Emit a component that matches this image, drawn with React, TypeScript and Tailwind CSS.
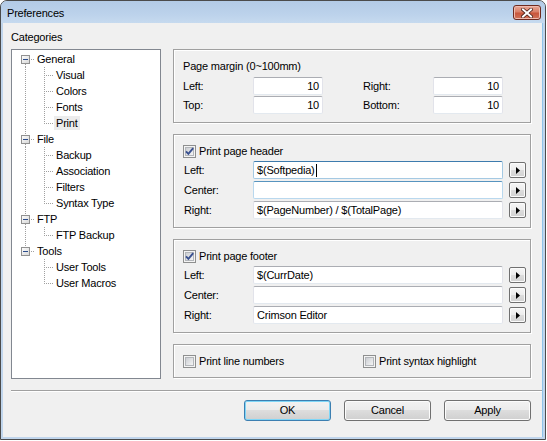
import React from "react";

type Node = { label: string; children: string[] };

const tree: Node[] = [
  { label: "General", children: ["Visual", "Colors", "Fonts", "Print"] },
  { label: "File", children: ["Backup", "Association", "Filters", "Syntax Type"] },
  { label: "FTP", children: ["FTP Backup"] },
  { label: "Tools", children: ["User Tools", "User Macros"] },
];

const DOT = "#a0a0a0";

function TopRow({ label, first, last }: { label: string; first: boolean; last: boolean }) {
  return (
    <div className="flex h-[16px] items-center">
      <svg width="23" height="16" className="shrink-0">
        <defs>
          <linearGradient id="bx" x1="0" y1="0" x2="1" y2="1">
            <stop offset="0" stopColor="#ffffff" />
            <stop offset="1" stopColor="#d6d6d6" />
          </linearGradient>
        </defs>
        {!first && <line x1="13.5" y1="0" x2="13.5" y2="4" stroke={DOT} strokeDasharray="1 1" />}
        {!last && <line x1="13.5" y1="13" x2="13.5" y2="16" stroke={DOT} strokeDasharray="1 1" />}
        <rect x="9.5" y="4.5" width="8" height="8" fill="url(#bx)" stroke="#919191" />
        <line x1="11" y1="8.5" x2="16" y2="8.5" stroke="#2b4c8c" />
        <line x1="19" y1="8.5" x2="23" y2="8.5" stroke={DOT} strokeDasharray="1 1" />
      </svg>
      <span className="px-[2px] h-[14px] leading-[14px]">{label}</span>
    </div>
  );
}

function ChildRow({
  label,
  parentLast,
  last,
  selected,
}: {
  label: string;
  parentLast: boolean;
  last: boolean;
  selected?: boolean;
}) {
  return (
    <div className="flex h-[16px] items-center">
      <svg width="42" height="16" className="shrink-0">
        {!parentLast && <line x1="13.5" y1="0" x2="13.5" y2="16" stroke={DOT} strokeDasharray="1 1" />}
        <line x1="32.5" y1="0" x2="32.5" y2={last ? 9 : 16} stroke={DOT} strokeDasharray="1 1" />
        <line x1="34" y1="8.5" x2="42" y2="8.5" stroke={DOT} strokeDasharray="1 1" />
      </svg>
      <span className={"px-[2px] h-[14px] leading-[14px] " + (selected ? "bg-[#ececec]" : "")}>{label}</span>
    </div>
  );
}

function Tree() {
  return (
    <div className="w-[150px] h-[330px] border border-[#828790] bg-white pt-[1px]">
      {tree.map((n, i) => {
        const last = i === tree.length - 1;
        return (
          <div key={n.label}>
            <TopRow label={n.label} first={i === 0} last={last} />
            {n.children.map((c, j) => (
              <ChildRow
                key={c}
                label={c}
                parentLast={last}
                last={j === n.children.length - 1}
                selected={c === "Print"}
              />
            ))}
          </div>
        );
      })}
    </div>
  );
}

function Checkbox({ checked }: { checked?: boolean }) {
  return (
    <svg width="13" height="13" className="shrink-0">
      <defs>
        <linearGradient id="cb" x1="0" y1="0" x2="1" y2="1">
          <stop offset="0" stopColor="#c9ccd1" />
          <stop offset="1" stopColor="#f7f7f7" />
        </linearGradient>
      </defs>
      <rect x="0.5" y="0.5" width="12" height="12" fill="#f4f4f4" stroke="#8e8f8f" />
      <rect x="2.5" y="2.5" width="8" height="8" fill="url(#cb)" stroke="#b3b6ba" />
      {checked && (
        <path d="M3 6.3 L5.4 8.8 L10.2 3.2" fill="none" stroke="#3a5190" strokeWidth="1.9" />
      )}
    </svg>
  );
}

type FieldState = "normal" | "focus" | "hover";

function Field({
  value,
  width,
  right,
  state = "normal",
  caret,
}: {
  value: string;
  width: string;
  right?: boolean;
  state?: FieldState;
  caret?: boolean;
}) {
  const border =
    state === "focus"
      ? "border-[#a4c9e3] border-t-[#3d7bad]"
      : state === "hover"
      ? "border-[#b9d8ee] border-t-[#5794bf]"
      : "border-[#e2e3ea] border-t-[#abadb3] border-b-[#e3e9ef]";
  return (
    <div
      className={
        "h-[18px] bg-white border rounded-[2px] px-[3px] flex items-center leading-[14px] " +
        border +
        " " +
        width +
        (right ? " justify-end" : "")
      }
    >
      <span>{value}</span>
      {caret && <span className="inline-block w-px h-[13px] bg-black ml-[1px]" />}
    </div>
  );
}

function ArrowBtn() {
  return (
    <div className="w-[17px] h-[16px] ml-[6px] rounded-[2px] border border-[#707070] bg-[linear-gradient(#f6f6f6,#ececec_50%,#dcdcdc_50%,#d2d2d2)] shadow-[inset_0_0_0_1px_#fbfbfb] flex items-center justify-center">
      <svg width="4" height="7">
        <polygon points="0,0 4,3.5 0,7" fill="#000" />
      </svg>
    </div>
  );
}

function Panel({ children, className }: { children: React.ReactNode; className?: string }) {
  return (
    <div
      className={
        "border border-[#a0a0a0] shadow-[inset_1px_1px_0_#ffffff,1px_1px_0_#ffffff] pl-[9px] " + (className || "")
      }
    >
      {children}
    </div>
  );
}

function TextRow({
  label,
  value,
  state,
  caret,
}: {
  label: string;
  value: string;
  state?: FieldState;
  caret?: boolean;
}) {
  return (
    <div className="flex items-center h-[18px]">
      <span className="w-[70px] pl-[1px]">{label}</span>
      <Field value={value} width="w-[250px]" state={state} caret={caret} />
      <ArrowBtn />
    </div>
  );
}

function HeaderPanel({
  title,
  rows,
}: {
  title: string;
  rows: { label: string; value: string; state?: FieldState; caret?: boolean }[];
}) {
  return (
    <Panel className="pt-[9px] pb-[8px]">
      <div className="flex items-center h-[15px] gap-[3px]">
        <Checkbox checked />
        <span>{title}</span>
      </div>
      <div className="flex flex-col gap-[2px] mt-[2px]">
        {rows.map((r) => (
          <TextRow key={r.label} {...r} />
        ))}
      </div>
    </Panel>
  );
}

function Button({ label, def }: { label: string; def?: boolean }) {
  return (
    <div
      className={
        "w-[87px] h-[21px] rounded-[3px] border flex items-center justify-center bg-[linear-gradient(#f2f2f2,#ebebeb_50%,#dddddd_50%,#cfcfcf)] " +
        (def
          ? "border-[#3c7fb1] shadow-[inset_0_0_0_1px_#7fd6f7]"
          : "border-[#707070] shadow-[inset_0_0_0_1px_#fcfcfc]")
      }
    >
      {label}
    </div>
  );
}

function CloseBtn() {
  return (
    <div className="w-[28px] h-[15px] mt-[4px] rounded-[3px] border border-[#6e2a1f] bg-[linear-gradient(#e9a797,#d98068_45%,#c9563c_55%,#d0735a)] shadow-[inset_0_0_0_1px_#eebbaf] flex items-center justify-center">
      <svg width="12" height="10" viewBox="0 0 12 10">
        <path d="M2 1.5 L10 8.5 M10 1.5 L2 8.5" stroke="#4a2018" strokeWidth="3.6" strokeLinecap="square" />
        <path d="M2 1.5 L10 8.5 M10 1.5 L2 8.5" stroke="#ffffff" strokeWidth="2" strokeLinecap="square" />
      </svg>
    </div>
  );
}

export default function App() {
  return (
    <div className="w-[547px] h-[441px] bg-white font-['Liberation_Sans',Arial,sans-serif] text-[11px] leading-[13px] tracking-[-0.2px] text-black">
      <div className="w-[546px] h-[440px] border border-[#4b4b4b] rounded-t-[7px] overflow-hidden flex flex-col bg-[#c0d5ec]">
        <div className="h-[22px] shrink-0 flex items-start justify-between bg-[linear-gradient(#b3cbe6,#bcd2eb_60%,#c6daef)] pl-[6px] pr-[4px]">
          <span className="mt-[6px]">Preferences</span>
          <CloseBtn />
        </div>
        <div className="flex-1 mx-[2px] mb-[2px] bg-[#f0f0f0] flex flex-col border-r border-r-[#8fc4ea]">
          <div className="flex pl-[8px] pr-[11px] pt-[8px] gap-[12px]">
            <div className="flex flex-col">
              <span className="h-[13px] mb-[5px]">Categories</span>
              <Tree />
            </div>
            <div className="flex flex-col w-[359px] pt-[18px] gap-[11px]">
              <Panel className="pt-[10px] pb-[8px]">
                <div className="h-[13px]">Page margin (0~100mm)</div>
                <div className="flex flex-col gap-[1px] mt-[4px]">
                  <div className="flex items-center h-[18px]">
                    <span className="w-[70px]">Left:</span>
                    <Field value="10" width="w-[70px]" right />
                    <span className="w-[40px]" />
                    <span className="w-[70px]">Right:</span>
                    <Field value="10" width="w-[70px]" right />
                  </div>
                  <div className="flex items-center h-[18px]">
                    <span className="w-[70px]">Top:</span>
                    <Field value="10" width="w-[70px]" right />
                    <span className="w-[40px]" />
                    <span className="w-[70px]">Bottom:</span>
                    <Field value="10" width="w-[70px]" right />
                  </div>
                </div>
              </Panel>
              <HeaderPanel
                title="Print page header"
                rows={[
                  { label: "Left:", value: "$(Softpedia)", state: "focus", caret: true },
                  { label: "Center:", value: "", state: "hover" },
                  { label: "Right:", value: "$(PageNumber) / $(TotalPage)" },
                ]}
              />
              <HeaderPanel
                title="Print page footer"
                rows={[
                  { label: "Left:", value: "$(CurrDate)" },
                  { label: "Center:", value: "" },
                  { label: "Right:", value: "Crimson Editor" },
                ]}
              />
              <Panel className="pt-[9px] pb-[8px]">
                <div className="flex items-center h-[15px]">
                  <div className="flex items-center gap-[3px] w-[180px]">
                    <Checkbox />
                    <span>Print line numbers</span>
                  </div>
                  <div className="flex items-center gap-[3px]">
                    <Checkbox />
                    <span>Print syntax highlight</span>
                  </div>
                </div>
              </Panel>
            </div>
          </div>
          <div className="ml-[8px] mt-[11px] h-[2px] border-t border-t-[#a0a0a0] border-b border-b-white" />
          <div className="flex justify-end gap-[13px] pr-[11px] mt-[8px]">
            <Button label="OK" def />
            <Button label="Cancel" />
            <Button label="Apply" />
          </div>
        </div>
      </div>
    </div>
  );
}
